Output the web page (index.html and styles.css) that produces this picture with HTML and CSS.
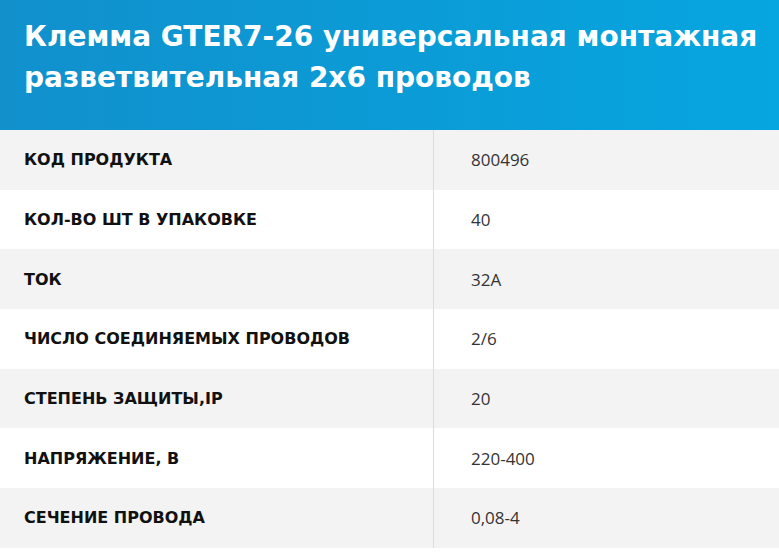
FILE: index.html
```html
<!DOCTYPE html>
<html lang="ru">
<head>
<meta charset="utf-8">
<link rel="stylesheet" href="styles.css">
</head>
<body>
<div class="card">
  <header class="head">
    <h1 class="title">Клемма GTER7-26 универсальная монтажная разветвительная 2x6 проводов</h1>
  </header>
  <div class="specs">
    <div class="row alt"><div class="key">КОД ПРОДУКТА</div><div class="val">800496</div></div>
    <div class="row"><div class="key">КОЛ-ВО ШТ В УПАКОВКЕ</div><div class="val">40</div></div>
    <div class="row alt"><div class="key">ТОК</div><div class="val">32A</div></div>
    <div class="row"><div class="key">ЧИСЛО СОЕДИНЯЕМЫХ ПРОВОДОВ</div><div class="val">2/6</div></div>
    <div class="row alt"><div class="key">СТЕПЕНЬ ЗАЩИТЫ,IP</div><div class="val">20</div></div>
    <div class="row"><div class="key">НАПРЯЖЕНИЕ, В</div><div class="val">220-400</div></div>
    <div class="row alt"><div class="key">СЕЧЕНИЕ ПРОВОДА</div><div class="val">0,08-4</div></div>
  </div>
</div>
</body>
</html>
```
FILE: styles.css
```css
html, body {
  margin: 0;
  padding: 0;
  background: #ffffff;
}
.card {
  width: 779px;
}
.head {
  height: 130px;
  box-sizing: border-box;
  padding: 16px 10px 0 24px;
  background: linear-gradient(90deg, #1190cc 0%, #06a6e0 100%);
}
.title {
  margin: 0;
  font-family: "DejaVu Sans", sans-serif;
  font-weight: 700;
  font-size: 28px;
  line-height: 41px;
  color: #ffffff;
}
.specs {
  display: flex;
  flex-direction: column;
}
.row {
  display: grid;
  grid-template-columns: 434px 1fr;
  height: 59.7px;
  background: #ffffff;
}
.row.alt {
  background: #f3f3f3;
}
.key {
  display: flex;
  align-items: center;
  padding-left: 24px;
  border-right: 1px solid #dcdcdc;
  font-family: "DejaVu Sans", sans-serif;
  font-weight: 700;
  font-size: 16px;
  color: #111111;
}
.val {
  display: flex;
  align-items: center;
  padding-left: 37px;
  font-family: "Open Sans", sans-serif;
  font-weight: 400;
  font-size: 17px;
  color: #333333;
}
```
